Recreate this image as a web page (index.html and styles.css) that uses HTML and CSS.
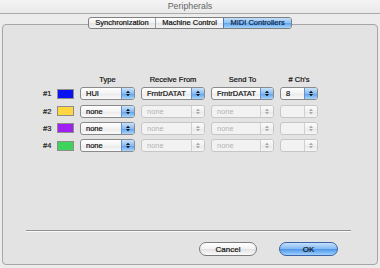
FILE: index.html
```html
<!DOCTYPE html>
<html lang="en">

<head>
    <meta charset="UTF-8">
    <meta name="viewport" content="width=device-width, initial-scale=1.0">
    <link rel="stylesheet" href="styles.css">
    <title>Peripherals</title>
</head>

<body>
    <div class="titlebar">Peripherals</div>
    <div class="windowBody">
        <div class="tabs">
            <div class="tab">Synchronization</div>
            <div class="tab">Machine Control</div>
            <div class="tab selected">MIDI Controllers</div>
        </div>
        <div class="panel">
            <div class="grid">
                <div></div>
                <div></div>
                <div class="head">Type</div>
                <div class="head">Receive From</div>
                <div class="head">Send To</div>
                <div class="head"># Ch's</div>

                <div class="num">#1</div>
                <div class="swatch" style="background: #0a12f2;"></div>
                <div class="popup"><span>HUI</span><i><svg viewBox="0 0 5 8"><polygon points="0,3.3 2.5,0.5 5,3.3" /><polygon points="0,4.7 2.5,7.5 5,4.7" /></svg></i></div>
                <div class="popup"><span>FrntrDATAT</span><i><svg viewBox="0 0 5 8"><polygon points="0,3.3 2.5,0.5 5,3.3" /><polygon points="0,4.7 2.5,7.5 5,4.7" /></svg></i></div>
                <div class="popup"><span>FrntrDATAT</span><i><svg viewBox="0 0 5 8"><polygon points="0,3.3 2.5,0.5 5,3.3" /><polygon points="0,4.7 2.5,7.5 5,4.7" /></svg></i></div>
                <div class="popup"><span>8</span><i><svg viewBox="0 0 5 8"><polygon points="0,3.3 2.5,0.5 5,3.3" /><polygon points="0,4.7 2.5,7.5 5,4.7" /></svg></i></div>

                <div class="num">#2</div>
                <div class="swatch" style="background: #fdd640;"></div>
                <div class="popup"><span>none</span><i><svg viewBox="0 0 5 8"><polygon points="0,3.3 2.5,0.5 5,3.3" /><polygon points="0,4.7 2.5,7.5 5,4.7" /></svg></i></div>
                <div class="popup disabled"><span>none</span><i><svg viewBox="0 0 5 8"><polygon points="0,3.3 2.5,0.5 5,3.3" /><polygon points="0,4.7 2.5,7.5 5,4.7" /></svg></i></div>
                <div class="popup disabled"><span>none</span><i><svg viewBox="0 0 5 8"><polygon points="0,3.3 2.5,0.5 5,3.3" /><polygon points="0,4.7 2.5,7.5 5,4.7" /></svg></i></div>
                <div class="popup disabled"><span></span><i><svg viewBox="0 0 5 8"><polygon points="0,3.3 2.5,0.5 5,3.3" /><polygon points="0,4.7 2.5,7.5 5,4.7" /></svg></i></div>

                <div class="num">#3</div>
                <div class="swatch" style="background: #a21ff2;"></div>
                <div class="popup"><span>none</span><i><svg viewBox="0 0 5 8"><polygon points="0,3.3 2.5,0.5 5,3.3" /><polygon points="0,4.7 2.5,7.5 5,4.7" /></svg></i></div>
                <div class="popup disabled"><span>none</span><i><svg viewBox="0 0 5 8"><polygon points="0,3.3 2.5,0.5 5,3.3" /><polygon points="0,4.7 2.5,7.5 5,4.7" /></svg></i></div>
                <div class="popup disabled"><span>none</span><i><svg viewBox="0 0 5 8"><polygon points="0,3.3 2.5,0.5 5,3.3" /><polygon points="0,4.7 2.5,7.5 5,4.7" /></svg></i></div>
                <div class="popup disabled"><span></span><i><svg viewBox="0 0 5 8"><polygon points="0,3.3 2.5,0.5 5,3.3" /><polygon points="0,4.7 2.5,7.5 5,4.7" /></svg></i></div>

                <div class="num">#4</div>
                <div class="swatch" style="background: #3fd35c;"></div>
                <div class="popup"><span>none</span><i><svg viewBox="0 0 5 8"><polygon points="0,3.3 2.5,0.5 5,3.3" /><polygon points="0,4.7 2.5,7.5 5,4.7" /></svg></i></div>
                <div class="popup disabled"><span>none</span><i><svg viewBox="0 0 5 8"><polygon points="0,3.3 2.5,0.5 5,3.3" /><polygon points="0,4.7 2.5,7.5 5,4.7" /></svg></i></div>
                <div class="popup disabled"><span>none</span><i><svg viewBox="0 0 5 8"><polygon points="0,3.3 2.5,0.5 5,3.3" /><polygon points="0,4.7 2.5,7.5 5,4.7" /></svg></i></div>
                <div class="popup disabled"><span></span><i><svg viewBox="0 0 5 8"><polygon points="0,3.3 2.5,0.5 5,3.3" /><polygon points="0,4.7 2.5,7.5 5,4.7" /></svg></i></div>
            </div>

            <div class="separator"></div>
            <div class="buttons">
                <button class="cancel">Cancel</button>
                <button class="ok">OK</button>
            </div>
        </div>
    </div>
</body>

</html>
```

FILE: styles.css
```css
body {
    margin: 0;
    width: 380px;
    height: 268px;
    overflow: hidden;
    background-color: #ececec;
    font-family: 'Liberation Sans', Arial, sans-serif;
    font-size: 7.5px;
    color: #111;
    -webkit-text-stroke: 0.2px;
}

.titlebar {
    height: 13px;
    line-height: 13px;
    text-align: center;
    font-size: 8.8px;
    color: #666;
    -webkit-text-stroke: 0;
    background: linear-gradient(#f4f4f4, #e9e9e9);
    border-bottom: 1px solid #a9a9a9;
}

.windowBody {
    padding: 3px 2px 0 2px;
}

.tabs {
    position: relative;
    z-index: 2;
    display: flex;
    width: 204px;
    height: 12px;
    margin: 0 auto;
    box-sizing: border-box;
    border: 1px solid #7f7f7f;
    border-radius: 3px;
    background: linear-gradient(#ffffff, #f1f1f1 50%, #e4e4e4 51%, #f4f4f4);
    overflow: hidden;
}

.tab {
    flex: 1 1 auto;
    text-align: center;
    line-height: 10px;
    border-left: 1px solid #9c9c9c;
}

.tab:first-child {
    border-left: none;
}

.tab.selected {
    color: #0c1f48;
    background: linear-gradient(#c5e0fb, #8cc0f4 50%, #5fa4ee 51%, #a8d5fb);
    border-left-color: #4a78c4;
}

.panel {
    margin-top: -5px;
    height: 241px;
    box-sizing: border-box;
    border: 1px solid #a6a6a6;
    border-radius: 4px;
    background: #e3e3e3;
    display: flex;
    flex-direction: column;
    padding: 50px 0 8px 0;
}

.grid {
    display: grid;
    grid-template-columns: 8px 17px 55px 64px 63px 38px;
    grid-template-rows: 8px;
    grid-auto-rows: 13px;
    column-gap: 6px;
    row-gap: 4.3px;
    margin-left: 40px;
}

.head {
    text-align: center;
    line-height: 9px;
}

.num {
    line-height: 13px;
    color: #222;
}

.swatch {
    height: 10px;
    margin-top: 1.5px;
    box-sizing: border-box;
    border: 1px solid #8d8d8d;
}

.popup {
    display: flex;
    box-sizing: border-box;
    border: 1px solid #8a8a8a;
    border-radius: 3px;
    background: linear-gradient(#ffffff, #f3f3f3 50%, #e9e9e9 51%, #fbfbfb);
    overflow: hidden;
}

.popup span {
    flex: 1 1 auto;
    padding-left: 5px;
    line-height: 11px;
}

.popup i {
    width: 12px;
    display: flex;
    align-items: center;
    justify-content: center;
    border-left: 1px solid #6b8fcb;
    background: linear-gradient(#c9e3fc, #88bcf3 50%, #5b9fec 51%, #a9d6fc);
}

.popup svg {
    width: 4px;
    height: 7px;
    fill: #111;
}

.popup.disabled {
    border-color: #c6c6c6;
    background: #f2f2f2;
    color: #b3b3b3;
    -webkit-text-stroke: 0;
}

.popup.disabled i {
    border-left-color: #d0d0d0;
    background: linear-gradient(#fbfbfb, #f0f0f0 50%, #e8e8e8 51%, #f6f6f6);
}

.popup.disabled svg {
    fill: #a8a8a8;
}

.separator {
    margin: auto 26px 10px 23px;
    height: 1px;
    background: #8f8f8f;
    border-bottom: 1px solid #fafafa;
}

.buttons {
    display: flex;
    justify-content: flex-end;
    gap: 22px;
    margin-right: 39px;
}

button {
    width: 58px;
    height: 14px;
    padding: 0;
    font-family: 'Liberation Sans', Arial, sans-serif;
    font-size: 8px;
    color: #111;
    -webkit-text-stroke: 0.2px;
    border-radius: 7px;
    border: 1px solid #7c7c7c;
    background: linear-gradient(#ffffff, #f2f2f2 50%, #e2e2e2 51%, #fafafa);
}

button.ok {
    width: 59px;
    border-color: #3c63a6;
    background: linear-gradient(#c4e1fc, #81b8f3 50%, #4c94ea 51%, #9fd1fb);
}
```
